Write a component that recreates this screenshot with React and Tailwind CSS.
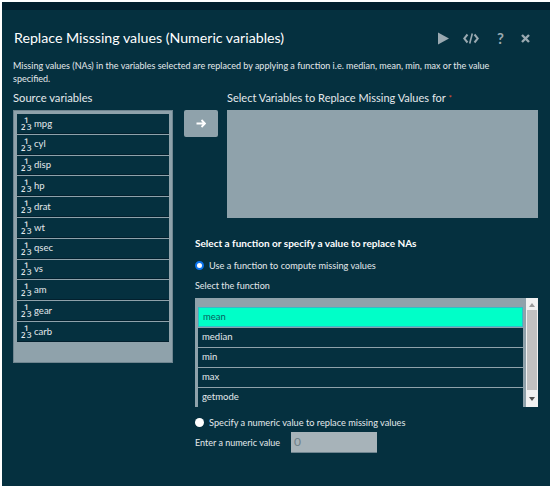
const font = { fontFamily: 'Lato, "Noto Sans", sans-serif' };

function NumIcon() {
  return (
    <span className="inline-block w-[11px] mr-[2px] text-[13px] leading-none tracking-[-1.6px] text-[#e4e9ec] shrink-0 whitespace-nowrap" style={{ fontFamily: '"Noto Sans", sans-serif' }}>₂¹₃</span>
  );
}

const vars = ["mpg", "cyl", "disp", "hp", "drat", "wt", "qsec", "vs", "am", "gear", "carb"];
const fns = ["mean", "median", "min", "max", "getmode"];

export default function App() {
  return (
    <div className="w-[552px] h-[488px] bg-white pl-[2px] pt-[2px] pr-[2px] pb-[2px] overflow-hidden" style={font}>
      <div className="h-[8px] bg-[#03202e]" />
      <div className="h-[476px] bg-[#05303f] pt-[18px] text-[#e4e9ec]">
        <div className="flex items-center justify-between pl-[12px] pr-[20px] h-[20px]">
          <h1 className="text-[14.2px] leading-[20px] text-white">Replace Misssing values (Numeric variables)</h1>
          <div className="flex items-center text-[#9aa9b1]">
            <svg width="13" height="13" viewBox="0 0 12 13" className="mr-[13px]"><path d="M0.5 0.5L11.5 6.5L0.5 12.5Z" fill="currentColor" /></svg>
            <svg width="16" height="11" viewBox="0 0 16 11" className="mr-[18px]" fill="none" stroke="currentColor" strokeWidth="2"><path d="M4.5 1.5L1.2 5.5L4.5 9.5M11.5 1.5L14.8 5.5L11.5 9.5" /><path d="M9.3 0.5L6.7 10.5" strokeWidth="1.6" /></svg>
            <span className="text-[15px] font-bold leading-none mr-[17px]">?</span>
            <svg width="9" height="9" viewBox="0 0 9 9" stroke="currentColor" strokeWidth="2.4"><path d="M1 1L8 8M8 1L1 8" /></svg>
          </div>
        </div>
        <p className="mt-[12px] pl-[11px] pr-[40px] text-[9px] leading-[12.5px]">
          Missing values (NAs) in the variables selected are replaced by applying a function i.e. median, mean, min, max or the value specified.
        </p>
        <div className="flex mt-[6px] pl-[11px]">
          <div className="w-[160px] shrink-0">
            <div className="text-[11.2px] leading-[14px] h-[19px]">Source variables</div>
            <div className="h-[253px] bg-[#8fa2ab] border border-[#6f8590] pl-[3px] pr-[3px] pt-[3px] flex flex-col gap-[1px]">
              {vars.map((v) => (
                <div key={v} className="h-[19.8px] bg-[#05303f] border-b border-[#03202e] flex items-center pl-[4px] text-[9.5px] leading-none">
                  <NumIcon />{v}
                </div>
              ))}
            </div>
          </div>
          <div className="w-[34px] ml-[11px] mt-[19px] shrink-0">
            <div className="h-[27px] bg-[#8fa2ab] rounded-[2px] flex items-center justify-center">
              <svg width="10" height="9" viewBox="0 0 10 9" fill="none" stroke="white" strokeWidth="1.8"><path d="M0.5 4.5H9M5.5 1L9 4.5L5.5 8" /></svg>
            </div>
          </div>
          <div className="ml-[9px] w-[311px] shrink-0">
            <div className="text-[11px] leading-[14px] h-[19px]">
              Select Variables to Replace Missing Values for <span className="text-[#e0502f] text-[8px] align-top">*</span>
            </div>
            <div className="h-[108px] bg-[#8fa2ab]" />
            <div className="-ml-[32px] w-[343px] mt-[18px]">
              <div className="text-[10px] leading-[14px] font-bold text-white">Select a function or specify a value to replace NAs</div>
              <label className="flex items-center mt-[9px] h-[14px] text-[9.2px]">
                <span className="w-[9px] h-[9px] rounded-full bg-white border-[2.5px] border-[#0b74ef] mr-[5px] -mt-[1px]" />
                Use a function to compute missing values
              </label>
              <div className="mt-[6px] text-[9px] leading-[14px]">Select the function</div>
              <div className="mt-[5px] h-[109px] flex w-[343px]">
                <div className="flex-1 bg-[#8fa2ab] pt-[9px] pl-[3px] pr-[3px] flex flex-col gap-[1px]">
                  {fns.map((f, i) => (
                    <div key={f} className={"shrink-0 flex items-center pl-[4px] text-[9.5px] " + (i === 0 ? "h-[20px] bg-[#00ffc8] text-[#075f5c] border border-[#35b9c9]" : "h-[19px] bg-[#05303f] text-[#e4e9ec]")}>{f}</div>
                  ))}
                </div>
                <div className="w-[12px] bg-[#f1f1f1] flex flex-col items-center">
                  <svg width="6" height="4" viewBox="0 0 6 4" className="mt-[5px]"><path d="M3 0L6 4H0Z" fill="#9a9a9a" /></svg>
                  <div className="w-[10px] h-[80px] bg-[#c1c1c1] mt-[3px]" />
                  <svg width="6" height="4" viewBox="0 0 6 4" className="mt-[7px]"><path d="M3 4L6 0H0Z" fill="#505050" /></svg>
                </div>
              </div>
              <label className="flex items-center mt-[9px] h-[14px] text-[9.2px]">
                <span className="w-[9px] h-[9px] rounded-full bg-white mr-[5px] -mt-[1px]" />
                Specify a numeric value to replace missing values
              </label>
              <div className="flex items-center mt-[2px] text-[9px]">
                <span className="w-[96px]">Enter a numeric value</span>
                <div className="w-[86px] h-[21px] bg-[#a7b3b9] border-b border-[#6f8590] flex items-center pl-[3px] text-[12px] text-[#6f8088]">0</div>
              </div>
            </div>
          </div>
        </div>
      </div>
    </div>
  );
}
